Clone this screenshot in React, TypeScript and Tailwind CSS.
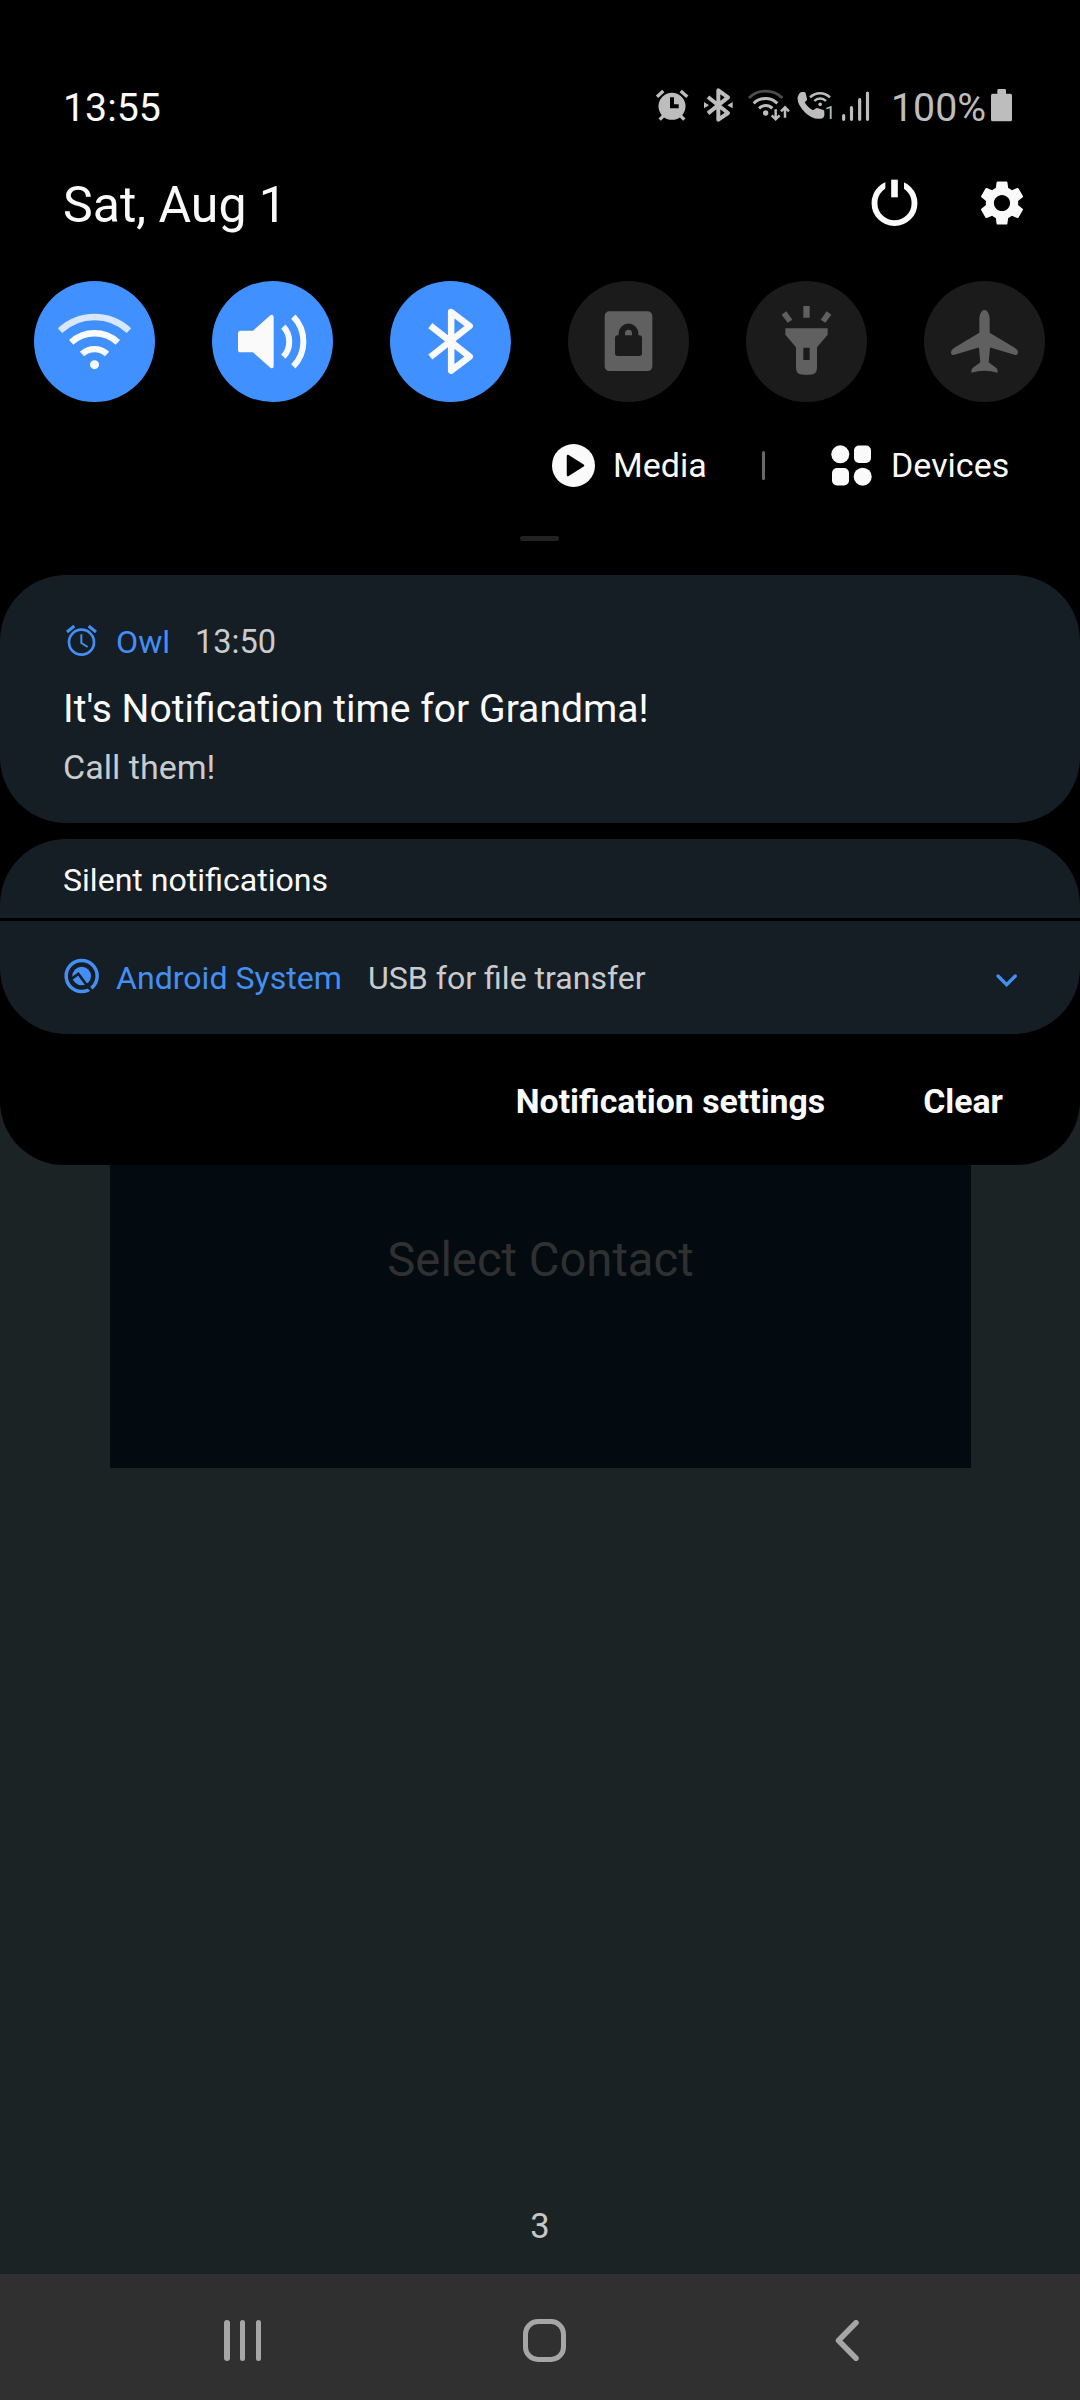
import React from "react";
import type { ReactNode } from "react";
import { MdSettings } from "react-icons/md";

type IconProps = { box: string; className: string; children: ReactNode };

function Icon({ box, className, children }: IconProps) {
  return (
    <svg viewBox={box} className={"shrink-0 " + className} fill="none" aria-hidden="true">
      {children}
    </svg>
  );
}

const GREY = "#bdbdbd";
const WHITE = "#fafafa";
const BLUE = "#448ff4";
const DIM = "#606060";
const OFF = "#1b1b1b";

function StatusBar() {
  return (
    <div className="flex h-[65px] items-center pl-[63px] pr-[67px]">
      <span className="pt-[2px] text-[39.3px] leading-none text-[#fafafa]">13:55</span>
      <div className="ml-auto flex items-center">
        <Icon box="45 52 105 120" className="h-[40px] w-[35px]">
          <circle cx="96" cy="110" r="40.5" fill={GREY} />
          <path d="M51 81L70 64M122 64L142 81" stroke={GREY} strokeWidth="10" />
          <path d="M71 138L59 150M121 138L133 150" stroke={GREY} strokeWidth="10" />
          <path d="M90 83H102V104H116V116H90Z" fill="#000" />
        </Icon>
        <Icon box="189 52 93 120" className="ml-[13px] h-[40px] w-[31px]">
          <path d="M204 82L264 130L235 150V62L264 83L204 131" stroke={GREY} strokeWidth="12" strokeLinejoin="round" />
          <path d="M192 97L207 107L192 116ZM278 97L262 107L278 116Z" fill={GREY} />
        </Icon>
        <Icon box="321 52 129 120" className="ml-[13px] h-[40px] w-[43px]">
          <path d="M327 85A71 71 0 0 1 427 85" stroke="#4d4d4d" strokeWidth="8.5" />
          <path d="M341 101A51 51 0 0 1 412 101" stroke={GREY} strokeWidth="9" />
          <path d="M357 116A28 28 0 0 1 397 116" stroke={GREY} strokeWidth="9" />
          <circle cx="377" cy="130" r="8" fill={GREY} />
          <path d="M407 119V148M395 137L407 149L419 137M435 144V114M423 125L435 113L447 125" stroke={GREY} strokeWidth="7.5" />
        </Icon>
        <Icon box="471 52 111 120" className="ml-[7px] h-[40px] w-[37px]">
          <path d="M477 73Q480 67 486 67H492Q496 67 497 71L501 87Q502 90 499 93L494 98Q503 114 519 122L526 117Q530 114 534 116L550 121Q553 122 553 126V138Q550 147 541 147Q518 150 496 129Q470 104 473 82Z" fill={GREY} />
          <path d="M510 83A42 42 0 0 1 570 83" stroke={GREY} strokeWidth="7.5" />
          <path d="M523 94A24 24 0 0 1 558 94" stroke={GREY} strokeWidth="7.5" />
          <circle cx="540.500" cy="104" r="5.500" fill={GREY} />
          <text x="554" y="149.500" fontSize="57" fontFamily="Roboto, sans-serif" fill={GREY}>1</text>
        </Icon>
        <Icon box="603 52 87 120" className="ml-[7px] h-[40px] w-[29px]">
          <path d="M611 138V149M634.500 114V149M659 90V149M682.500 70V149" stroke={GREY} strokeWidth="9.500" strokeLinecap="round" />
        </Icon>
        <span className="ml-[21px] w-[95px] pt-[2px] text-[39.3px] leading-none text-[#bdbdbd]">100%</span>
        <Icon box="1050 52 69 120" className="ml-[4px] h-[40px] w-[23px]">
          <path d="M1072 72V62Q1072 58 1076 58H1094Q1098 58 1098 62V72H1111Q1116 72 1116 77V150Q1116 155 1111 155H1058Q1053 155 1053 150V77Q1053 72 1058 72Z" fill={GREY} />
        </Icon>
      </div>
    </div>
  );
}

function HeaderRow() {
  return (
    <div className="mt-[25px] flex h-[80px] items-center pl-[63px] pr-[51px]">
      <span className="text-[50px] leading-none text-[#fafafa]">Sat, Aug 1</span>
      <div className="mb-[4px] ml-auto flex items-center">
        <Icon box="690 323 150 150" className="h-[50px] w-[50px]">
          <circle cx="763.500" cy="398.500" r="60" stroke={WHITE} strokeWidth="17.500" />
          <path d="M736 325H792V392H736Z" fill="#000" />
          <path d="M753.500 328H773.500V381H753.500Z" fill={WHITE} />
        </Icon>
        <MdSettings className="ml-[55px] size-[54px] text-[#fafafa]" />
      </div>
    </div>
  );
}

const TILES: { on: boolean; box: string; glyph: ReactNode }[] = [
  {
    on: true,
    box: "42 33 363 363",
    glyph: (
      <>
        <path d="M120 182A151 151 0 0 1 327 182" stroke="#d7e7fe" strokeWidth="19" />
        <path d="M153.500 217A103.500 103.500 0 0 1 293.500 217" stroke={WHITE} strokeWidth="19" />
        <path d="M186 252A55 55 0 0 1 261 252" stroke={WHITE} strokeWidth="19" />
        <circle cx="223.500" cy="284" r="13.500" fill={WHITE} />
      </>
    ),
  },
  {
    on: true,
    box: "576 33 363 363",
    glyph: (
      <>
        <path d="M662 182H699L751 136Q761 131 761 142V287Q761 298 751 293L699 247H662Q654 247 654 239V190Q654 182 662 182Z" fill={WHITE} />
        <path d="M790 170A66 66 0 0 1 790 260M820 140A107 107 0 0 1 820 289" stroke={WHITE} strokeWidth="18" />
      </>
    ),
  },
  {
    on: true,
    box: "1110 33 363 363",
    glyph: <path d="M1231 167L1349 260L1293.500 302V126L1349 168L1231 261" stroke={WHITE} strokeWidth="19.500" strokeLinejoin="round" />,
  },
  {
    on: false,
    box: "84 33 363 363",
    glyph: (
      <>
        <rect x="194" y="124" width="143" height="179" rx="14" fill={DIM} />
        <rect x="225" y="196" width="81" height="62" rx="8" fill={OFF} />
        <path d="M236 200V190A29.500 29.500 0 0 1 295 190V200Z" fill={OFF} />
        <path d="M255 195.500V190A10.500 10.500 0 0 1 276 190V195.500Z" fill={DIM} />
      </>
    ),
  },
  {
    on: false,
    box: "618 33 363 363",
    glyph: (
      <>
        <path d="M790 108H809V143H790ZM725 134L739 124L757 149L743 158ZM874 134L860 124L842 149L856 158Z" fill={DIM} />
        <path fillRule="evenodd" d="M736 175H863V194L831 232V293Q831 314 810 314H789Q768 314 768 293V232L736 194ZM790 233V270H809V233Z" fill={DIM} />
      </>
    ),
  },
  {
    on: false,
    box: "1152 33 363 363",
    glyph: (
      <path d="M1333.500 120C1343 120 1349 134 1349 148V188L1424 233Q1434 239 1434 247Q1434 256 1426 255L1353 233Q1350 232 1350 235L1346 277L1369 294Q1374 298 1373 308Q1353 302 1333.500 302Q1314 302 1294 308Q1293 298 1298 294L1321 277L1317 235Q1317 232 1314 233L1241 255Q1233 256 1233 247Q1233 239 1243 233L1318 188V148C1318 134 1324 120 1333.500 120Z" fill={DIM} />
    ),
  },
];

function QuickTiles() {
  return (
    <div className="mt-[36px] flex gap-[57px] pl-[34px]">
      {TILES.map((tile) => (
        <div key={tile.box} className={tile.on ? "size-[121px] rounded-full bg-[#4190ff]" : "size-[121px] rounded-full bg-[#1b1b1b]"}>
          <Icon box={tile.box} className="size-[121px]">
            {tile.glyph}
          </Icon>
        </div>
      ))}
    </div>
  );
}

function MediaRow() {
  return (
    <div className="mt-[38px] flex h-[50px] items-center pl-[552px] text-[34px] leading-none text-[#fafafa]">
      <Icon box="0 0 43 43" className="size-[43px]">
        <circle cx="21.500" cy="21.500" r="21.500" fill={WHITE} />
        <path d="M16 12L31 21.500L16 31Z" fill="#000" stroke="#000" strokeWidth="2.500" strokeLinejoin="round" />
      </Icon>
      <span className="ml-[18px] w-[95px]">Media</span>
      <div className="ml-[54px] h-[29px] w-[3px] rounded-full bg-[#696969]" />
      <Icon box="0 0 41 41" className="ml-[66px] size-[41px]">
        <circle cx="9.300" cy="9.300" r="9" fill={WHITE} />
        <circle cx="31.700" cy="31.700" r="9" fill={WHITE} />
        <rect x="23" y="0.500" width="17" height="17.500" rx="5" fill={WHITE} />
        <rect x="1" y="23" width="17" height="17.500" rx="5" fill={WHITE} />
      </Icon>
      <span className="ml-[19px]">Devices</span>
    </div>
  );
}

function AlarmCard() {
  return (
    <section className="mt-[34px] h-[248px] rounded-[66px] bg-[#151d25] pt-[47px]">
      <div className="flex h-[40px] items-center pl-[66px] leading-none">
        <Icon box="48 42 96 99" className="mb-[3px] h-[33px] w-[32px]">
          <circle cx="94.500" cy="96.500" r="37.500" stroke={BLUE} strokeWidth="8" />
          <path d="M51 66L73 48M116 48L138 66" stroke={BLUE} strokeWidth="9" />
          <path d="M94 73V99L113 111" stroke={BLUE} strokeWidth="6" />
        </Icon>
        <span className="ml-[18px] w-[55px] text-[32.200px] text-[#448ff4]">Owl</span>
        <span className="ml-[24px] text-[32.600px] text-[#c9cbcd]">13:50</span>
      </div>
      <h2 className="mt-[22px] h-[50px] pl-[63px] text-[39.1px] font-normal leading-[50px] text-[#fafafa]">It's Notification time for Grandma!</h2>
      <p className="mt-[13px] h-[40px] pl-[63px] text-[34.1px] leading-[40px] text-[#c9cbcd]">Call them!</p>
    </section>
  );
}

function SilentCard() {
  return (
    <section className="mt-[16px] flex flex-col gap-[3px] overflow-hidden rounded-[66px] text-[32.1px] leading-none">
      <div className="flex h-[79px] items-center bg-[#151d25] pl-[63px] pt-[3px] text-[#fafafa]">Silent notifications</div>
      <div className="flex h-[113px] items-center bg-[#151d25] pl-[64px] pr-[62px]">
        <Icon box="42 1045 105 107" className="mb-[3px] h-[36px] w-[35px]">
          <circle cx="95" cy="1098.500" r="46.500" stroke={BLUE} strokeWidth="10.500" />
          <circle cx="95" cy="1098.500" r="28" fill={BLUE} />
          <path d="M62 1109L85 1092L118 1137" stroke="#151d25" strokeWidth="8" />
          <path d="M113 1127L127 1146" stroke="#151d25" strokeWidth="8" />
        </Icon>
        <span className="ml-[17px] w-[226px] whitespace-nowrap pt-[2px] text-[#448ff4]">Android System</span>
        <span className="ml-[26px] pt-[2px] text-[#c9cbcd]">USB for file transfer</span>
        <Icon box="945 460 70 48" className="ml-auto mt-[7px] h-[16px] w-[23.300px]">
          <path d="M954 469L980 495L1006 469" stroke={BLUE} strokeWidth="10" strokeLinecap="round" />
        </Icon>
      </div>
    </section>
  );
}

function NavBar() {
  return (
    <nav className="flex h-[126px] items-center bg-[#303030] pb-[0px] pl-[224px] pt-[7px]">
      <div className="flex gap-[10.400px]">
        <div className="h-[41px] w-[5.500px] rounded-full bg-[#a6a6a6]" />
        <div className="h-[41px] w-[5.500px] rounded-full bg-[#a6a6a6]" />
        <div className="h-[41px] w-[5.500px] rounded-full bg-[#a6a6a6]" />
      </div>
      <div className="ml-[261.700px] size-[43px] rounded-[15px] border-[5.500px] border-[#a6a6a6]" />
      <Icon box="0 0 24 41" className="ml-[268.800px] h-[41px] w-[24px]">
        <path d="M21 2.700L3.500 20.500L21 38.300" stroke="#a6a6a6" strokeWidth="5.500" strokeLinecap="round" strokeLinejoin="round" />
      </Icon>
    </nav>
  );
}

export default function App() {
  return (
    <main className="flex h-[2400px] w-[1080px] flex-col overflow-hidden bg-[#1c2325] font-['Roboto',sans-serif]">
      <div className="h-[1165px] rounded-b-[64px] bg-black pt-[75px]">
        <StatusBar />
        <HeaderRow />
        <QuickTiles />
        <MediaRow />
        <div className="ml-[520px] mt-[46px] h-[5px] w-[39px] rounded-full bg-[#222222]" />
        <AlarmCard />
        <SilentCard />
        <div className="flex h-[131px] items-center justify-end gap-[98px] pr-[77px] pt-[4px] text-[33.800px] font-bold leading-none text-[#fafafa]">
          <span>Notification settings</span>
          <span>Clear</span>
        </div>
      </div>
      <div className="ml-[110px] h-[303px] w-[861px] bg-[#030a10] pt-[65px] text-center text-[47.200px] leading-[60px] text-[#303030]">
        Select Contact
      </div>
      <div className="mt-auto pb-[28px] text-center text-[34.500px] leading-[40px] text-[#c6c8c8]">3</div>
      <NavBar />
    </main>
  );
}
